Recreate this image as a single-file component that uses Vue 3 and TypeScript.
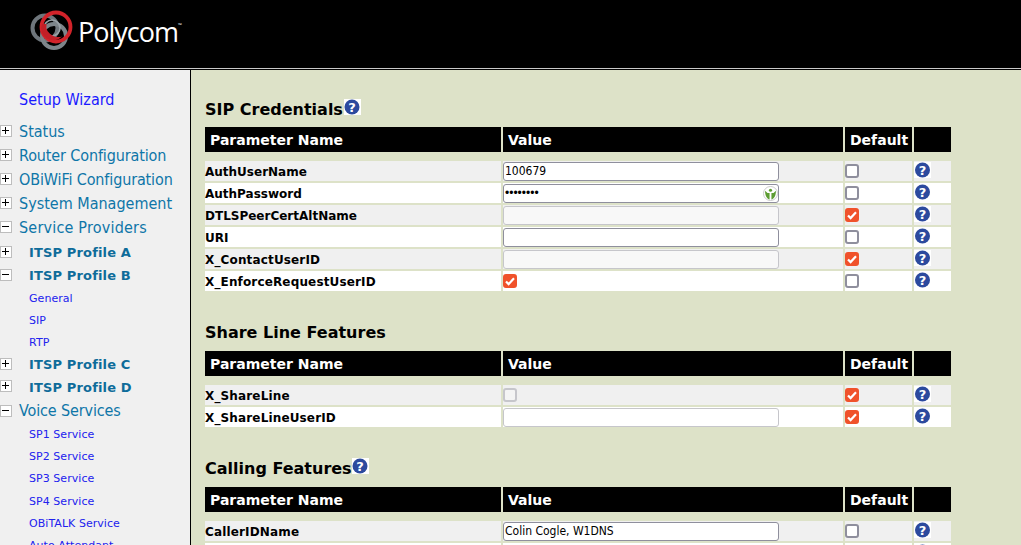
<script setup lang="ts">
interface Row { name: string; kind: 'text' | 'password' | 'check' | 'none'; value?: string; disabled?: boolean; checked?: boolean; def: boolean; eye?: boolean; soft?: boolean; wide?: boolean }
interface Section { title: string; help: boolean; rows: Row[]; cls: string }
interface Nav { label: string; level: 1 | 2 | 3; icon?: 'plus' | 'minus'; cls?: string }

const nav: Nav[] = [
  { label: 'Status', level: 1, icon: 'plus' },
  { label: 'Router Configuration', level: 1, icon: 'plus', cls: 'tight' },
  { label: 'OBiWiFi Configuration', level: 1, icon: 'plus', cls: 'tight' },
  { label: 'System Management', level: 1, icon: 'plus' },
  { label: 'Service Providers', level: 1, icon: 'minus', cls: 'loose' },
  { label: 'ITSP Profile A', level: 2, icon: 'plus', cls: 'gap' },
  { label: 'ITSP Profile B', level: 2, icon: 'minus' },
  { label: 'General', level: 3 },
  { label: 'SIP', level: 3 },
  { label: 'RTP', level: 3 },
  { label: 'ITSP Profile C', level: 2, icon: 'plus' },
  { label: 'ITSP Profile D', level: 2, icon: 'plus' },
  { label: 'Voice Services', level: 1, icon: 'minus', cls: 'tight' },
  { label: 'SP1 Service', level: 3, cls: 'sv first' },
  { label: 'SP2 Service', level: 3, cls: 'sv' },
  { label: 'SP3 Service', level: 3, cls: 'sv' },
  { label: 'SP4 Service', level: 3, cls: 'sv' },
  { label: 'OBiTALK Service', level: 3, cls: 'sv' },
  { label: 'Auto Attendant', level: 3, cls: 'sv' },
]

const sections: Section[] = [
  {
    title: 'SIP Credentials', help: true, cls: 'first',
    rows: [
      { name: 'AuthUserName', kind: 'text', value: '100679', def: false },
      { name: 'AuthPassword', kind: 'password', value: '••••••••', def: false, eye: true },
      { name: 'DTLSPeerCertAltName', kind: 'text', disabled: true, def: true },
      { name: 'URI', kind: 'text', def: false },
      { name: 'X_ContactUserID', kind: 'text', disabled: true, def: true, wide: true },
      { name: 'X_EnforceRequestUserID', kind: 'check', checked: true, def: false, wide: true },
    ],
  },
  {
    title: 'Share Line Features', help: false, cls: 'second',
    rows: [
      { name: 'X_ShareLine', kind: 'check', disabled: true, def: true, wide: true },
      { name: 'X_ShareLineUserID', kind: 'text', disabled: true, soft: true, def: true, wide: true },
    ],
  },
  {
    title: 'Calling Features', help: true, cls: 'third',
    rows: [
      { name: 'CallerIDName', kind: 'text', value: 'Colin Cogle, W1DNS', def: false, wide: true },
      { name: '', kind: 'none', def: false },
    ],
  },
]
</script>

<template>
  <div class="page">
    <header class="top">
      <svg class="logo" width="60" height="50" viewBox="0 0 60 50" aria-hidden="true">
        <circle cx="23" cy="22" r="12.5" fill="none" stroke="#6f767c" stroke-width="4" />
        <circle cx="32" cy="30" r="12" fill="none" stroke="#7d858a" stroke-width="4" />
        <circle cx="30" cy="22" r="8" fill="none" stroke="#9aa2a7" stroke-width="1.6" />
        <circle cx="34" cy="21" r="14.5" fill="none" stroke="#d2232a" stroke-width="3.8" />
        <path d="M20 18a12 12 0 0 0 20 12.5a13 13 0 0 1-14.5-5.5a10 10 0 0 1-1-7z" fill="#c21f27" />
      </svg>
      <span class="brand">Polycom<sup>™</sup></span>
    </header>
    <div class="main">
      <aside class="side">
        <a class="wizard">Setup Wizard</a>
        <div v-for="item in nav" :key="item.label" class="nav" :class="['lv' + item.level, item.cls]">
          <svg v-if="item.icon" class="tree" viewBox="0 0 12 12" aria-hidden="true">
            <rect x="0.5" y="0.5" width="11" height="11" fill="#fff" stroke="#bdbdbd" />
            <path :d="item.icon === 'plus' ? 'M2 5.5h7M5.5 2v7' : 'M2 5.5h7'" stroke="#000" stroke-width="1" fill="none" />
          </svg>
          <span class="lab">{{ item.label }}</span>
        </div>
      </aside>
      <section class="content">
        <template v-for="s in sections" :key="s.title">
          <h2 :class="s.cls">{{ s.title }}<svg v-if="s.help" class="help head" viewBox="0 0 17 16" aria-hidden="true"><rect width="17" height="16" fill="#fff" /><circle cx="8" cy="8" r="7.5" fill="#2c4a9e" /><text x="8" y="12.6" text-anchor="middle" class="q">?</text></svg></h2>
          <div class="grid">
            <div class="th">Parameter Name</div>
            <div class="th val">Value</div>
            <div class="th">Default</div>
            <div class="th"></div>
            <template v-for="(r, i) in s.rows" :key="i">
              <div class="td name" :class="{ odd: i % 2 === 0, wide: r.wide }">{{ r.name }}</div>
              <div class="td" :class="{ odd: i % 2 === 0 }">
                <div v-if="r.kind === 'text' || r.kind === 'password'" class="input" :class="{ dis: r.disabled, soft: r.soft, pw: r.kind === 'password' }">
                  <span>{{ r.value }}</span>
                  <svg v-if="r.eye" class="eye" viewBox="0 0 16 16" aria-hidden="true"><circle cx="8" cy="8" r="7.5" fill="#fff" stroke="#c8c8c8" /><path d="M2.2 5c0 6 2.6 9 4.8 9.3V7.5H4.8zM13.8 5c0 6-2.6 9-4.8 9.3V7.5h2.2z" fill="#5d9c32" /><circle cx="8" cy="4.5" r="1.7" fill="#5d9c32" /></svg>
                </div>
                <div v-else-if="r.kind === 'check'" class="box" :class="{ on: r.checked, off: r.disabled }">
                  <svg v-if="r.checked" viewBox="0 0 14 14" aria-hidden="true"><path d="M3 7.5l2.6 2.6L11 4.2" fill="none" stroke="#fff" stroke-width="2.2" /></svg>
                </div>
              </div>
              <div class="td" :class="{ odd: i % 2 === 0 }">
                <div class="box" :class="{ on: r.def }">
                  <svg v-if="r.def" viewBox="0 0 14 14" aria-hidden="true"><path d="M3 7.5l2.6 2.6L11 4.2" fill="none" stroke="#fff" stroke-width="2.2" /></svg>
                </div>
              </div>
              <div class="td hcell" :class="{ odd: i % 2 === 0 }">
                <svg class="help" viewBox="0 0 17 16" aria-hidden="true"><rect width="17" height="16" fill="#fff" /><circle cx="8.5" cy="8" r="7.5" fill="#2c4a9e" /><text x="8.5" y="12.6" text-anchor="middle" class="q">?</text></svg>
              </div>
            </template>
          </div>
        </template>
      </section>
    </div>
  </div>
</template>

<style>
html, body { margin: 0; height: 545px; overflow: hidden; }
</style>

<style scoped>
.page { width: 1021px; height: 545px; overflow: hidden; display: flex; flex-direction: column; font-family: "DejaVu Sans", Verdana, sans-serif; }
.top { height: 68px; background: #000; border-bottom: 1px solid #c9c9c9; flex: none; display: flex; align-items: flex-start; padding-left: 22px; }
.logo { margin-top: 6px; flex: none; }
.brand { color: #fff; font-family: "Open Sans", sans-serif; font-weight: 400; font-size: 27px; letter-spacing: -1px; line-height: 34px; margin: 15px 0 0 -4px; }
.brand sup { font-size: 5px; vertical-align: 15px; line-height: 0; }
.main { flex: 1; display: flex; min-height: 0; border-top: 1px solid #000; }
.side { width: 190px; flex: none; background: #f0f0f0; border-right: 1px solid #000; padding-top: 20px; }
.wizard { display: block; color: #1a1aff; font-family: "DejaVu Sans Condensed", "DejaVu Sans", sans-serif; font-size: 16px; line-height: 20px; padding-left: 19px; margin-bottom: 9px; }
.nav { position: relative; display: flex; align-items: center; color: #0e76a8; }
.lv1 { height: 24px; font-family: "DejaVu Sans Condensed", "DejaVu Sans", sans-serif; font-size: 16px; padding-left: 19px; }
.lv1.tight { letter-spacing: -0.13px; }
.lv1.loose { letter-spacing: 0.2px; }
.lv2 { height: 22.8px; font-weight: 700; font-size: 13px; letter-spacing: 0.15px; padding-left: 29px; color: #0e6c9a; }
.lv2.gap { margin-top: 2.6px; }
.lv3 { height: 22px; font-size: 11px; letter-spacing: 0.05px; padding-left: 29px; color: #2222ee; }
.lv3.sv { height: 22.25px; }
.lv3.first { margin-top: 0.5px; }
.tree { position: absolute; left: 0; top: 50%; margin-top: -6px; width: 12px; height: 12px; }
.lv2 .tree { margin-top: -7px; }
.content { flex: 1; background: #dde2c8; padding-left: 14px; min-width: 0; }
h2 { margin: 0; font-size: 16px; font-weight: 700; color: #000; line-height: 20px; display: flex; align-items: flex-start; }
h2.first { margin-top: 30px; margin-bottom: 7px; }
h2.second { margin-top: 32px; margin-bottom: 8px; }
h2.third { margin-top: 32px; margin-bottom: 8px; }
h2.first .head { margin-left: 1px; }
.grid { display: grid; grid-template-columns: 296px 340px 67px 37px; column-gap: 2px; row-gap: 2px; width: 746px; }
.th { background: #000; color: #fff; height: 25px; line-height: 27px; font-size: 14px; font-weight: 700; padding-left: 5px; margin-bottom: 7px; box-sizing: border-box; }
.td { height: 20px; background: #fff; display: flex; align-items: center; min-width: 0; }
.td.odd { background: #f0f0f0; }
.name { font-size: 12px; font-weight: 700; color: #000; padding-top: 2px; box-sizing: border-box; }
.name.wide { letter-spacing: 0.15px; }
.input { width: 276px; height: 19px; align-self: flex-end; box-sizing: border-box; border: 1px solid #8f8f9d; border-radius: 3px; background: #fff; font-family: "DejaVu Sans Condensed", "DejaVu Sans", sans-serif; font-size: 12px; line-height: 17px; padding-left: 1px; position: relative; color: #000; }
.input.pw { font-family: "Liberation Sans", sans-serif; }
.input.dis { border-color: #c6c6cb; background: #f8f8f8; }
.input.soft { background: #fff; }
.eye { position: absolute; right: 0; top: 1px; width: 15px; height: 15px; }
.box { width: 14px; height: 14px; box-sizing: border-box; border: 2px solid #8f8f9d; border-radius: 3px; background: #fff; }
.box.off { border-color: #c6c6cb; background: #f4f4f4; }
.box.on { background: #f0522a; border-color: #f0522a; }
.box svg { display: block; margin: -2px; width: 14px; height: 14px; }
.hcell { align-items: flex-start; }
.help { width: 17px; height: 16px; display: block; margin-top: 1px; }
.help.head { margin: -1px 0 0; }
.q { fill: #fff; font-family: "DejaVu Sans", sans-serif; font-weight: 700; font-size: 13px; }
</style>
